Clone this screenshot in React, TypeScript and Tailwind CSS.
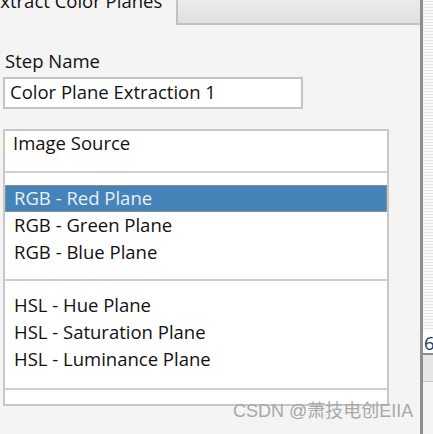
const font = { fontFamily: '"Open Sans", "Noto Sans", sans-serif' };

function Row({ label, selected }: { label: string; selected?: boolean }) {
  return (
    <div
      className={
        selected
          ? "h-[27px] flex items-center pl-[8px] bg-[#4584b8] text-[#eaf0f6] border border-dotted border-[#c89a6a]"
          : "h-[27px] flex items-center pl-[9px] text-[#111]"
      }
    >
      {label}
    </div>
  );
}

export default function App() {
  return (
    <div
      className="relative w-[433px] h-[434px] bg-[#f4f4f4] flex overflow-hidden text-[18.5px] leading-none"
      style={font}
    >
      <div className="w-[420px] shrink-0 flex flex-col">
        <div className="h-[25px] flex">
          <div className="w-[176px] shrink-0 overflow-hidden">
            <div className="-mt-[8px] -ml-[10px] whitespace-nowrap text-[#111]">Extract Color Planes</div>
          </div>
          <div className="flex-1 bg-gradient-to-b from-[#ececec] to-[#e0e0e0] border-l-2 border-b-2 border-[#c2c2c2]" />
        </div>

        <div className="pl-[5px] pt-[27px] text-[#111]">Step Name</div>
        <div className="ml-[3px] mt-[6px] w-[300px] h-[32px] bg-white border-2 border-[#c4c4c4] flex items-center pl-[5px] text-[#111]">
          Color Plane Extraction 1
        </div>

        <div className="ml-[3px] mt-[20px] w-[386px] h-[277px] bg-white border-2 border-[#c8c8c8] flex flex-col overflow-hidden">
          <div className="h-[40px] shrink-0 pl-[8px] pt-[3px] text-[#111]">Image Source</div>
          <div className="h-[2px] shrink-0 bg-[#cfcfcf]" />
          <div className="h-[12px] shrink-0" />
          <Row label="RGB - Red Plane" selected />
          <Row label="RGB - Green Plane" />
          <Row label="RGB - Blue Plane" />
          <div className="h-[13px] shrink-0" />
          <div className="h-[2px] shrink-0 bg-[#cfcfcf]" />
          <div className="h-[11px] shrink-0" />
          <Row label="HSL - Hue Plane" />
          <Row label="HSL - Saturation Plane" />
          <Row label="HSL - Luminance Plane" />
          <div className="h-[15px] shrink-0" />
          <div className="h-[2px] shrink-0 bg-[#cfcfcf]" />
        </div>
      </div>

      <div className="w-[13px] shrink-0 flex flex-col border-l-[3px] border-[#8e8e8e]">
        <div className="h-[331px] flex">
          <div className="w-[2px] bg-[#f2f2f2]" />
          <div className="flex-1 bg-[#e2e2e2] bg-[image:repeating-linear-gradient(0deg,#fbfbfb_0px,#fbfbfb_2px,transparent_2px,transparent_3px)]" />
        </div>
        <div className="h-[22px] bg-white overflow-hidden text-[#1a3a6a] pl-[1px] pt-[3px]">6</div>
        <div className="h-[2px] bg-[#8c8c8c]" />
        <div className="h-[26px] bg-[#e6e6e6]" />
        <div className="h-px bg-[#c8c8c8]" />
        <div className="flex-1 bg-[#f4f4f4]" />
      </div>

      <div
        className="absolute left-[233px] top-[402px] text-[18px] text-[#a8a8a8] whitespace-nowrap"
        style={{ fontFamily: '"Liberation Sans", "Noto Sans CJK SC", sans-serif' }}
      >
        CSDN @萧技电创EIIA
      </div>
    </div>
  );
}
